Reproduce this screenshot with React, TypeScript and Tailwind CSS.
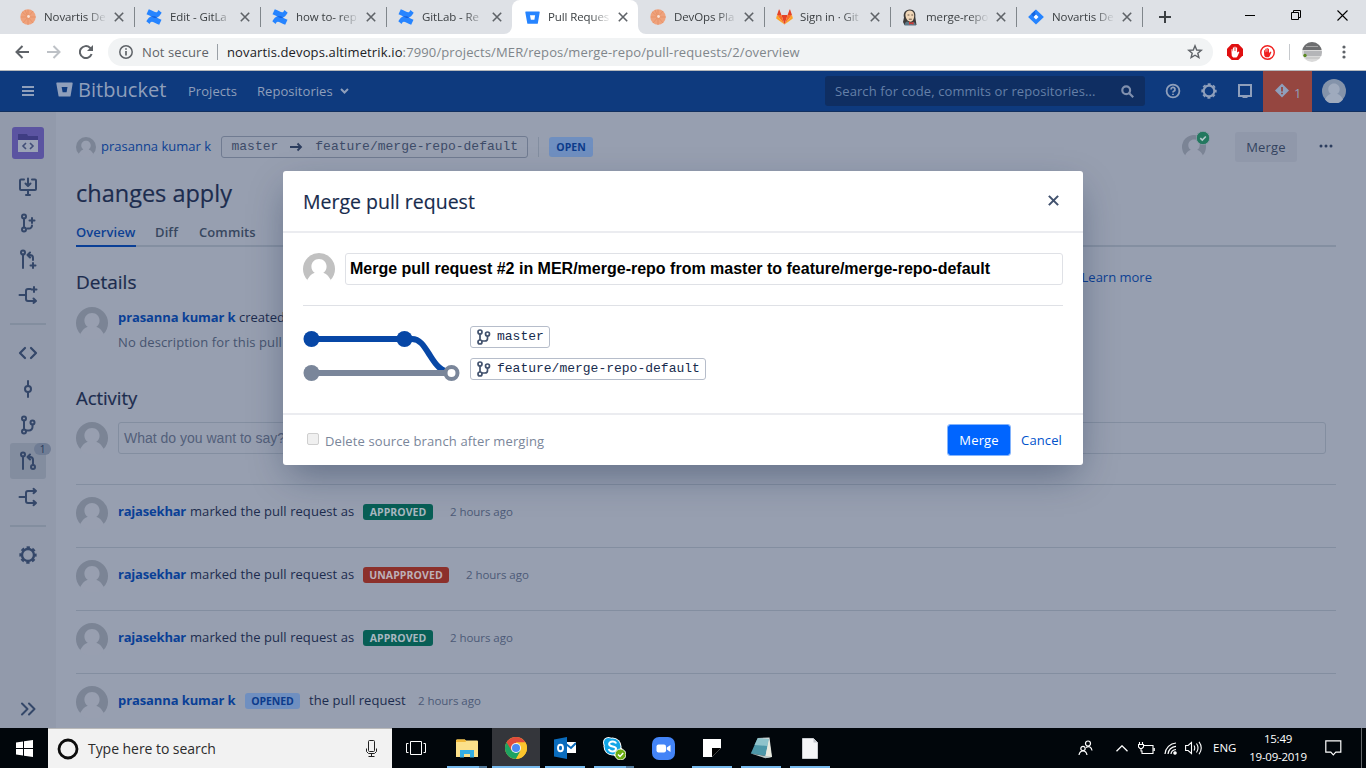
import React from "react";
import { clsx } from "clsx";

type Kids = { children?: React.ReactNode };

/* ---------- shared pieces ---------- */

function Avatar({ size, ring, face }: { size: number; ring: string; face: string }) {
  return (
    <svg width={size} height={size} viewBox="0 0 32 32" className="block shrink-0">
      <circle cx="16" cy="16" r="16" fill={ring} />
      <path
        d="M16 6c4.400 0 7.600 3.300 7.600 7.700 0 2.500-1.300 4.900-3.300 6.100C24.300 21.300 26 24 28 27.300 24.500 31.500 20.500 33 16 33S7.500 31.500 4 27.300C6 24 7.700 21.300 11.700 19.800c-2-1.200-3.300-3.600-3.300-6.100C8.400 9.300 11.600 6 16 6z"
        fill={face}
      />
    </svg>
  );
}

function Gear({ size = 18, className }: { size?: number; className?: string }) {
  return (
    <svg width={size} height={size} viewBox="0 0 18 18" fill="none" stroke="currentColor" className={className}>
      <circle cx="9" cy="9" r="6" strokeWidth="2.400" />
      <circle cx="9" cy="9" r="7.700" strokeWidth="1.900" strokeDasharray="3.400 2.648" strokeDashoffset="1.700" />
    </svg>
  );
}

function Line({ children, w = 2 }: Kids & { w?: number }) {
  return (
    <svg width="20" height="20" viewBox="0 0 20 20" fill="none" stroke="currentColor" strokeWidth={w} strokeLinecap="round" strokeLinejoin="round">
      {children}
    </svg>
  );
}

const BranchPaths = () => (
  <>
    <circle cx="6" cy="3.500" r="2" />
    <circle cx="6" cy="16.500" r="2" />
    <circle cx="14.500" cy="7.500" r="2" />
    <path d="M6 5.500v9M14.500 9.500v2.500a3.500 3.500 0 0 1-3.500 3.500H8.500" />
  </>
);

/* ---------- browser chrome ---------- */

function Ball() {
  return (
    <svg width="16" height="16" viewBox="0 0 16 16">
      <circle cx="8" cy="8" r="7.700" fill="#efa27c" />
      <path d="M8 8 2 3M8 8 5 1M8 8 1 8M8 8l-5 6M8 8v8M8 8l5 6M8 8h8M8 8l5-6M8 8l0-7" stroke="#e58e62" strokeWidth=".7" />
      <circle cx="8.500" cy="7.500" r="1.400" fill="#fbe3d6" />
    </svg>
  );
}

function Confluence() {
  return (
    <svg width="16" height="16" viewBox="0 0 16 16" className="shrink-0">
      <path d="M.3 12.200C2 9.500 3.800 6.800 7 7.300c2.500.5 5.300 2.200 8.500 3.500l-2.300 4.900C9.500 14.200 7.300 12.700 5.800 12.700c-1 0-1.500.9-2.200 2.300z" fill="#2684ff" />
      <path d="M15.700 3.800C14 6.500 12.200 9.200 9 8.700 6.500 8.200 3.700 6.500.5 5.200L2.800.3C6.500 1.800 8.700 3.300 10.200 3.300c1 0 1.500-.9 2.200-2.300z" fill="#2684ff" />
      <path d="M4.500 6.900C6.500 8 8.500 9.300 11.500 9L9 7.200 7 7.200z" fill="#1560dd" />
    </svg>
  );
}

function Bucket({ size, body, hole }: { size: number; body: string; hole: string }) {
  return (
    <svg width={size} height={size} viewBox="0 0 16 16">
      <path d="M1 1.500h14a.7.7 0 0 1 .7.800l-2 11.700a.8.800 0 0 1-.8.700H3.200a.8.800 0 0 1-.8-.7L.3 2.300A.7.700 0 0 1 1 1.500z" fill={body} />
      <path d="M5.300 5.600h5.500L10 10.500H6.200z" fill={hole} />
    </svg>
  );
}

function GitlabIcon() {
  return (
    <svg width="17" height="16" viewBox="0 0 17 16" className="shrink-0">
      <path d="M8.500 15.500 11.600 6H5.400z" fill="#e24329" />
      <path d="M8.500 15.500 5.400 6H1zM8.500 15.500 11.600 6H16z" fill="#fc6d26" />
      <path d="M1 6 .2 9c0 .3 0 .5.300.7l8 5.800zM16 6l.8 3c0 .3 0 .5-.3.7l-8 5.800z" fill="#fca326" />
      <path d="M1 6h4.400L3.400.6c-.1-.3-.4-.3-.5 0zM16 6h-4.400L13.600.6c.1-.3.4-.3.500 0z" fill="#e24329" />
    </svg>
  );
}

function JenkinsIcon() {
  return (
    <svg width="16" height="17" viewBox="0 0 16 17">
      <path d="M2 8.500C.8 4 3.400.4 7.800.4S14 3.800 13.300 8L14.500 16H2.500L1 13z" fill="#3d3a38" />
      <path d="M3.400 5.500C3.700 2.800 5.700 1.300 8 1.400c2.800.1 4.300 2.300 4.200 5.100-.1 3.600-1.500 6.100-3.700 6.200C5.800 12.600 3.400 9.500 3.400 5.500z" fill="#f0d6b7" />
      <path d="M5.600 6h1.800M9.300 6h1.800M6.800 10.200h3" stroke="#5b4a3c" strokeWidth=".9" />
      <path d="M2.500 16.500c.2-2.500 1.500-4 3-4l3 1.500 3-1c1.500.5 2.300 1.500 2.500 3.500z" fill="#5e7887" />
      <path d="m7 12.500 2 1.200 2.500-1v3.100L9 14.800l-2 1z" fill="#d33833" />
    </svg>
  );
}

function JiraIcon() {
  return (
    <svg width="16" height="16" viewBox="0 0 16 16">
      <path d="M8 .4 15.400 7.400a.8.800 0 0 1 0 1.200L8 15.600.6 8.600a.8.800 0 0 1 0-1.200z" fill="#2684ff" />
      <path d="M8 .4C6.700 2 6.700 4 8 5.400L5.500 7.900 3.200 5z" fill="#1566e0" />
      <path d="M8 5.500 10.500 8 8 10.500 5.500 8z" fill="#fff" />
    </svg>
  );
}

const Cross = ({ s, w, c }: { s: number; w: number; c: string }) => (
  <svg width={s} height={s} viewBox="0 0 10 10" fill="none" stroke={c} strokeWidth={w} className="shrink-0">
    <path d="M.8.800 9.200 9.200M9.200.8.800 9.200" />
  </svg>
);

function Tab({ icon, label, active, sep }: { icon: React.ReactNode; label: string; active?: boolean; sep?: boolean }) {
  return (
    <div className={clsx("relative flex h-[34px] w-[126px] shrink-0 items-center pl-3", active && "rounded-t-lg bg-white")}>
      <span className="flex w-4 shrink-0 justify-center">{icon}</span>
      <span className="ml-2 w-[63px] shrink-0 whitespace-nowrap text-[11.5px] leading-5 tracking-[-0.1px] text-[#3c4043] [mask-image:linear-gradient(90deg,#000_68%,transparent_100%)]">
        {label}
      </span>
      <span className="ml-[7px]">
        <Cross s={10} w={1.6} c="#5f6368" />
      </span>
      {sep && <span className="absolute right-[-1px] top-[7px] h-5 w-px bg-[#80868b]" />}
      {active && (
        <>
          <svg className="absolute bottom-0 left-[-8px]" width="8" height="8"><path d="M0 8h8V0a8 8 0 0 1-8 8z" fill="#fff" /></svg>
          <svg className="absolute bottom-0 right-[-8px]" width="8" height="8"><path d="M8 8H0V0a8 8 0 0 0 8 8z" fill="#fff" /></svg>
        </>
      )}
    </div>
  );
}

function TabStrip() {
  return (
    <div className="flex h-[34px] shrink-0 bg-[#dee1e6] pl-2">
      <Tab icon={<Ball />} label="Novartis De" sep />
      <Tab icon={<Confluence />} label="Edit - GitLa" sep />
      <Tab icon={<Confluence />} label="how to- rep" sep />
      <Tab icon={<Confluence />} label="GitLab - Re" />
      <Tab icon={<Bucket size={15} body="#2684ff" hole="#fff" />} label="Pull Reques" active />
      <Tab icon={<Ball />} label="DevOps Pla" sep />
      <Tab icon={<GitlabIcon />} label="Sign in · Git" sep />
      <Tab icon={<JenkinsIcon />} label="merge-repo" sep />
      <Tab icon={<JiraIcon />} label="Novartis De" sep />
      <div className="flex flex-1 items-center">
        <svg width="12" height="12" viewBox="0 0 12 12" className="ml-[17px]" stroke="#3c4043" strokeWidth="2"><path d="M6 0v12M0 6h12" /></svg>
        <div className="mb-1 ml-auto flex h-7 items-center gap-9 pr-[18px]">
          <svg width="10" height="10" viewBox="0 0 10 10"><path d="M0 5.500h10" stroke="#000" /></svg>
          <svg width="10" height="10" viewBox="0 0 10 10" fill="none" stroke="#000"><path d="M.5 2.500h7v7h-7zM2.500 2.500v-2h7v7h-2" /></svg>
          <svg width="11" height="11" viewBox="0 0 11 11" stroke="#000" strokeWidth="1.100"><path d="m.5.500 10 10m0-10-10 10" /></svg>
        </div>
      </div>
    </div>
  );
}

function Toolbar() {
  return (
    <div className="flex h-[37px] shrink-0 items-center border-b border-[#b5b8bc] bg-white text-[#5f6368]">
      <svg width="14" height="14" viewBox="0 0 14 14" className="ml-[15px]" fill="none" stroke="#5f6368" strokeWidth="2"><path d="M14 7H1.500M7.500 1 1.500 7l6 6" /></svg>
      <svg width="14" height="14" viewBox="0 0 14 14" className="ml-[18px]" fill="none" stroke="#bdc1c6" strokeWidth="2"><path d="M0 7h12.500M6.500 1l6 6-6 6" /></svg>
      <svg width="14" height="14" viewBox="0 0 14 14" className="ml-[18px]" fill="none" stroke="#5f6368" strokeWidth="2"><path d="M12.600 9A6 6 0 1 1 11 2.700L13 5" /><path d="M14 0v6H8z" fill="#5f6368" stroke="none" /></svg>
      <div className="ml-[15px] flex h-7 w-[1105px] items-center rounded-full bg-[#f1f3f4] pl-[11px] text-[13px]">
        <svg width="14" height="14" viewBox="0 0 14 14" fill="none" stroke="#5f6368" strokeWidth="1.500"><circle cx="7" cy="7" r="6.200" /><path d="M7 6v4.500M7 3.300v1.500" strokeWidth="1.700" /></svg>
        <span className="ml-[9px] w-[75px] whitespace-nowrap pt-px tracking-[0.1px]">Not secure</span>
        <span className="h-4 w-px bg-[#9aa0a6]" />
        <span className="ml-[9px] whitespace-nowrap pt-px tracking-[0.13px] text-[#80868b]"><span className="text-[#202124]">novartis.devops.altimetrik.io</span>:7990/projects/MER/repos/merge-repo/pull-requests/2/overview</span>
        <svg width="16" height="16" viewBox="0 0 16 16" className="ml-auto mr-[10px]" fill="none" stroke="#5f6368" strokeWidth="1.400"><path d="m8 1.800 1.700 4.200 4.600.300-3.500 2.900 1.100 4.400L8 11.200l-3.900 2.400 1.100-4.400L1.700 6.300l4.600-.3z" /></svg>
      </div>
      <svg width="16" height="16" viewBox="0 0 16 16" className="ml-[14px]"><path d="M4.700 0h6.600L16 4.700v6.600L11.300 16H4.700L0 11.300V4.700z" fill="#e00f10" /><path d="M4.500 8.500V5.300h1v2h.4V3.600H7v3.500h.4V2.800h1.200v4.300H9V3.600h1.100v5l1.500-1.200.8.600-1.900 4.200-1 1.200H6.200L4.800 12z" fill="#fff" /></svg>
      <svg width="15" height="15" viewBox="0 0 16 16" className="ml-[17px]"><circle cx="8" cy="8" r="7.200" fill="#fff" stroke="#f0201f" strokeWidth="1.500" /><path d="M4.300 8.500V5.600h1v2h.4V4H6.700v3.200h.4V3.300h1.100v3.900h.4V4H9.600v4.600l1.700-1.600.9.500-1.900 4.400-.9 1.100H5.900L4.600 11.500z" fill="#f0201f" /></svg>
      <span className="ml-[14px] h-4 w-px bg-[#c6c9cd]" />
      <svg width="20" height="20" viewBox="0 0 20 20" className="ml-[12px]">
        <defs><clipPath id="pf"><circle cx="10" cy="10" r="10" /></clipPath></defs>
        <g clipPath="url(#pf)"><path d="M0 0h20v20H0z" fill="#d9d9d9" /><path d="M0 0h20v8H0z" fill="#6d6e70" /><path d="M2 9h18v5H2z" fill="#b4b5b8" /><path d="M4 4.500h12" stroke="#a5a5a5" /><path d="M4 16h14" stroke="#bbb" /><circle cx="3" cy="13.500" r="1.700" fill="#5b8a22" /></g>
      </svg>
      <svg width="4" height="14" viewBox="0 0 4 14" className="ml-[20px]" fill="#5f6368"><circle cx="2" cy="2" r="1.600" /><circle cx="2" cy="7" r="1.600" /><circle cx="2" cy="12" r="1.600" /></svg>
    </div>
  );
}

/* ---------- Bitbucket ---------- */

function AppHeader() {
  return (
    <div className="flex h-[41px] shrink-0 items-center border-b border-[#12305f] bg-[#0e3a7e] text-[13px] text-[#8f9fbb]">
      <svg width="12" height="10" viewBox="0 0 12 10" className="ml-[22px]" stroke="currentColor" strokeWidth="1.800"><path d="M0 1h12M0 5h12M0 9h12" /></svg>
      <span className="mb-1 ml-[22px] flex"><Bucket size={17} body="#8f9fbb" hole="#0e3a7e" /></span>
      <span className="mb-[3px] ml-[5px] w-[110px] text-[20px] leading-6 tracking-[0.05px]">Bitbucket</span>
      <span className="w-[69px] pt-px tracking-[0.05px]">Projects</span>
      <span className="w-[82px] pt-px tracking-[0.05px]">Repositories</span>
      <svg width="9" height="6" viewBox="0 0 9 6" className="ml-px" fill="none" stroke="currentColor" strokeWidth="2"><path d="m1 1 3.500 3.500L8 1" /></svg>
      <div className="ml-auto flex h-[30px] w-[320px] items-center justify-between rounded-[3px] bg-[#0f2e62] pl-[10px] pr-[11px] text-[#6580a8]">
        <span className="whitespace-nowrap pt-px tracking-[0.1px]">Search for code, commits or repositories...</span>
        <svg width="13" height="13" viewBox="0 0 13 13" fill="none" stroke="#8090ae" strokeWidth="2.200"><circle cx="5.200" cy="5.200" r="3.900" /><path d="m8 8 4.200 4.200" /></svg>
      </div>
      <svg width="16" height="16" viewBox="0 0 16 16" className="ml-[20px]" fill="none" stroke="currentColor" strokeWidth="1.800"><circle cx="8" cy="8" r="6.400" /><path d="M6 6.400a2 2 0 1 1 2.800 1.800c-.6.300-.8.600-.8 1.300M8 10.700v1.300" /></svg>
      <Gear size={16} className="ml-[20px]" />
      <svg width="16" height="16" viewBox="0 0 16 16" className="ml-[20px]" fill="none" stroke="currentColor" strokeWidth="2"><path d="M2 2h12v11H2z" /><path d="M5.500 14h5" /></svg>
      <span className="ml-[10px] flex h-[41px] w-[49px] items-center bg-[#954640] pl-[11px]">
        <svg width="16" height="16" viewBox="0 0 16 16"><path d="m8 .6 7 6.900-7 7L1 7.500z" fill="currentColor" strokeLinejoin="round" /><path d="M8 4v4.400M8 9.700v1.600" stroke="#954640" strokeWidth="1.800" /></svg>
        <span className="ml-[4px] mt-[5px] text-[13px]">1</span>
      </span>
      <span className="ml-[10px] mr-[20px] rounded-full"><Avatar size={24} ring="#8493aa" face="#9faabd" /></span>
    </div>
  );
}

function SideItem({ children, active }: Kids & { active?: boolean }) {
  return (
    <div className={clsx("relative flex h-9 w-9 shrink-0 items-center justify-center rounded-[3px]", active && "bg-[#838d9f]")}>
      {children}
      {active && (
        <span className="absolute left-6 top-0 flex h-3 w-[17px] items-center justify-center rounded-full bg-[#6f7c94] text-[10px] leading-3 text-[#26385a]">1</span>
      )}
    </div>
  );
}

function Sidebar() {
  return (
    <div className="flex w-14 shrink-0 flex-col items-center bg-[#929aab] pt-[15px] text-[#344769]">
      <div className="flex h-8 w-8 shrink-0 items-center justify-center rounded-[3px] bg-[#5b54a1]">
        <svg width="20" height="19" viewBox="0 0 20 19"><path d="M0 0h9l1 2h10v4H0z" fill="#3f3d83" /><path d="M0 6h20v12H0z" fill="#9ba3b6" /><path d="m8 9-3 3 3 3m4-6 3 3-3 3" fill="none" stroke="#424f78" strokeWidth="1.600" /></svg>
      </div>
      <div className="mt-[10px]">
        <SideItem><Line><path d="M6 2.500H3a1 1 0 0 0-1 1v8.500a1 1 0 0 0 1 1h14a1 1 0 0 0 1-1V3.500a1 1 0 0 0-1-1h-3M10 1.500v7M7.500 6.500 10 9l2.500-2.500M8 18h4M10 14v3.500" /></Line></SideItem>
        <SideItem><Line><circle cx="6" cy="3.500" r="2" /><circle cx="6" cy="16.500" r="2" /><path d="M6 5.500v9M14 5v5M11.500 7.500h5M14 12.500a3 3 0 0 1-3 3H9.500" /></Line></SideItem>
        <SideItem><Line><circle cx="5" cy="3.500" r="2" /><path d="M5 5.500V19M15 14v5M12.500 16.500h5M15 11V9a3 3 0 0 0-3-3H9.500M12 3.500 9.500 6l2.500 2.500" /></Line></SideItem>
        <SideItem><Line><path d="M1.500 10H8M16 16H10a2 2 0 0 1-2-2V6a2 2 0 0 1 2-2h2.500M16 2v5M13.500 4.500h5M15.500 13.500 18 16l-2.500 2" /></Line></SideItem>
      </div>
      <div className="mt-[10px] h-0.5 w-9 shrink-0 bg-[#838e9f]" />
      <div className="mt-[10px]">
        <SideItem><Line w={2.2}><path d="m7 5-5 5 5 5M13 5l5 5-5 5" /></Line></SideItem>
        <SideItem><Line><circle cx="10" cy="10" r="3" /><path d="M10 2v5M10 13v5" /></Line></SideItem>
        <SideItem><Line><BranchPaths /></Line></SideItem>
        <SideItem active><Line><circle cx="5" cy="3.500" r="2" /><circle cx="15" cy="16" r="2" /><path d="M5 5.500V18M15 14V9a3 3 0 0 0-3-3H9.500M12 3.500 9.500 6l2.500 2.500" /></Line></SideItem>
        <SideItem><Line><path d="M1.500 10H8M18 16H10a2 2 0 0 1-2-2V6a2 2 0 0 1 2-2h8M15.500 1.800 18 4l-2.500 2.200M15.500 13.800 18 16l-2.500 2.200" /></Line></SideItem>
      </div>
      <div className="mt-[10px] h-0.5 w-9 shrink-0 bg-[#838e9f]" />
      <div className="mt-[10px]"><SideItem><Gear size={18} /></SideItem></div>
      <div className="mb-px mt-auto"><SideItem><Line><path d="m4 4.500 5.500 5.500L4 15.500M11 4.500l5.500 5.500-5.500 5.500" /></Line></SideItem></div>
    </div>
  );
}

const PageAvatar = ({ size }: { size: number }) => <Avatar size={size} ring="#7b8495" face="#989fb0" />;

function Lozenge({ tone, children }: Kids & { tone: "green" | "red" | "blue" }) {
  return (
    <span
      className={clsx(
        "flex h-4 shrink-0 items-center justify-center rounded-[3px] pt-px text-[10.5px] font-bold leading-[15px]",
        tone === "green" && "w-[70px] bg-[#085f56] tracking-[0.05px] text-[#a9b7c0]",
        tone === "red" && "w-[86px] bg-[#8c302b] tracking-[0.1px] text-[#bdb0b8]",
        tone === "blue" && "w-[55px] bg-[#6f8fc0] tracking-[-0.05px] text-[#0c3b8b]"
      )}
    >
      {children}
    </span>
  );
}

function Activity({ who, lozenge, time, opened }: { who: string; lozenge: React.ReactNode; time: string; opened?: boolean }) {
  return (
    <div className="flex h-[63px] items-start border-t border-[#838ea0] pt-3">
      <PageAvatar size={32} />
      <div className="ml-[10px] flex h-[30px] items-center whitespace-nowrap text-[13px] text-[#1c2c4e]">
        <span className={clsx("font-bold text-[#0a3f96]", opened ? "w-[127px] tracking-[-0.1px]" : "w-[72px] tracking-[-0.2px]")}>{who}</span>
        {opened ? (
          <>{lozenge}<span className="ml-[9px] w-[109px] tracking-[0.06px]">the pull request</span></>
        ) : (
          <><span className="w-[173px] tracking-[0.06px]">marked the pull request as</span>{lozenge}<span className="w-[17px]" /></>
        )}
        <span className="text-[11.5px] tracking-[-0.05px] text-[#4c5a77]">{time}</span>
      </div>
    </div>
  );
}

function PullRequest() {
  return (
    <div className="flex min-w-0 flex-1 flex-col overflow-hidden bg-[#979fb0] pl-5 pr-[30px] text-[13px] text-[#1c2c4e]">
      <div className="mt-5 flex h-[30px] shrink-0 items-center">
        <PageAvatar size={20} />
        <span className="ml-[5px] w-[120px] whitespace-nowrap text-[#0d3f93]">prasanna kumar k</span>
        <span className="flex h-[22px] w-[307px] items-center whitespace-nowrap rounded-[3px] border border-[#707b91] pl-[9.500px] font-['Liberation_Mono',monospace] text-[13px] text-[#3d4b68]">
          master
          <svg width="13" height="10" viewBox="0 0 13 10" className="mx-3 shrink-0 text-[#2c3d5e]" fill="none" stroke="currentColor" strokeWidth="1.800"><path d="M0 5h11.500M7.500 1.500 11 5 7.500 8.500" /></svg>
          feature/merge-repo-default
        </span>
        <span className="ml-[10px] h-5 w-px bg-[#838ea0]" />
        <span className="ml-[10px] flex h-5 w-11 items-center justify-center rounded-[3px] bg-[#6f8fc0] pt-px text-[10.500px] font-bold text-[#0c3b8b]">OPEN</span>
        <span className="relative ml-auto"><PageAvatar size={24} />
          <svg width="14" height="14" viewBox="0 0 14 14" className="absolute -right-1 -top-1"><circle cx="7" cy="7" r="6.700" fill="#23785f" stroke="#979fb0" strokeWidth=".8" /><path d="m4.300 7.200 2 1.900 3.500-3.600" fill="none" stroke="#b4c9cc" strokeWidth="1.600" /></svg>
        </span>
        <span className="ml-[29px] flex h-[30px] w-[62px] items-center justify-center rounded-[3px] bg-[#9098aa] pt-0.5 tracking-[0.15px] text-[#33435f]">Merge</span>
        <svg width="14" height="4" viewBox="0 0 14 4" className="mb-[3px] ml-[22px] mr-[3px]" fill="#2c3d5e"><circle cx="2" cy="2" r="1.500" /><circle cx="7" cy="2" r="1.500" /><circle cx="12" cy="2" r="1.500" /></svg>
      </div>
      <h1 className="mt-[17px] h-[29px] shrink-0 overflow-hidden whitespace-nowrap text-[23.5px] font-medium leading-[29px] [-webkit-text-stroke:0.2px_currentColor]">changes apply</h1>
      <div className="mt-[12px] flex h-[27px] shrink-0 border-b-2 border-[#848fa1] font-semibold leading-[25px] text-[#37475f]">
        <span className="h-[27px] w-[60px] whitespace-nowrap border-b-2 border-[#0a3f96] tracking-[0.05px] text-[#0d3f93]">Overview</span>
        <span className="ml-[19px] w-6 tracking-[0.1px]">Diff</span>
        <span className="ml-5 tracking-[0.1px]">Commits</span>
      </div>
      <div className="mt-[15px] flex h-8 shrink-0 items-center justify-between">
        <h2 className="mt-2 text-[19px] font-medium leading-7 [-webkit-text-stroke:0.2px_currentColor]">Details</h2>
        <a className="mr-[184px] whitespace-nowrap text-[#0d3f93]">Learn more</a>
      </div>
      <div className="mt-[13px] flex shrink-0">
        <PageAvatar size={32} />
        <div className="ml-[10px] whitespace-nowrap">
          <p className="h-6 leading-[20px]"><b className="inline-block w-[121px] tracking-[-0.1px] text-[#0a3f96]">prasanna kumar k</b>created</p>
          <p className="h-6 leading-[22px] tracking-[0.1px] text-[#46546f]">No description for this pull request</p>
        </div>
      </div>
      <h2 className="mt-[29px] h-7 shrink-0 text-[18.5px] font-medium leading-[27px] tracking-[-0.05px] [-webkit-text-stroke:0.2px_currentColor]">Activity</h2>
      <div className="mt-[10px] flex shrink-0">
        <PageAvatar size={32} />
        <div className="ml-[10px] flex h-8 w-[1208px] items-center rounded-[3px] border border-[#838ea0] pl-[5px] font-['Liberation_Sans',Arial,sans-serif] text-[14px] text-[#53607a]">What do you want to say?</div>
      </div>
      <div className="mt-[30px]">
        <Activity who="rajasekhar" lozenge={<Lozenge tone="green">APPROVED</Lozenge>} time="2 hours ago" />
        <Activity who="rajasekhar" lozenge={<Lozenge tone="red">UNAPPROVED</Lozenge>} time="2 hours ago" />
        <Activity who="rajasekhar" lozenge={<Lozenge tone="green">APPROVED</Lozenge>} time="2 hours ago" />
        <Activity who="prasanna kumar k" lozenge={<Lozenge tone="blue">OPENED</Lozenge>} time="2 hours ago" opened />
      </div>
    </div>
  );
}

function BranchTag({ name }: { name: string }) {
  return (
    <span className="flex h-[22px] w-fit items-center rounded-[3px] border border-[#b6bdca] px-[5px] font-['Liberation_Mono',monospace] text-[13px] leading-5 text-[#172b4d]">
      <svg width="16" height="16" viewBox="0 0 16 16" className="mr-[5px]" fill="none" stroke="#42526e" strokeWidth="1.700">
        <circle cx="4" cy="3" r="2" />
        <circle cx="4" cy="13" r="2" />
        <circle cx="11.500" cy="5" r="2" />
        <path d="M4 5v6M11.500 7v2.500a2.500 2.500 0 0 1-2.500 2.500H6" />
      </svg>
      {name}
    </span>
  );
}

function MergeDialog() {
  return (
    <div className="absolute left-[283px] top-[171px] flex h-[294px] w-[800px] flex-col rounded-[3px] bg-white text-[13px] shadow-[0_14px_36px_-6px_rgba(9,30,66,0.4)]">
      <div className="flex h-[62px] items-center justify-between border-b-2 border-[#ebecf0] pl-5 pr-[24px]">
        <h2 className="pt-px text-[19.5px] font-medium text-[#172b4d] [-webkit-text-stroke:0.15px_currentColor]">Merge pull request</h2>
        <span className="mb-px"><Cross s={11} w={1.9} c="#42526e" /></span>
      </div>
      <div className="flex flex-1 flex-col px-5 pt-5">
        <div className="flex items-center gap-[10px]">
          <Avatar size={32} ring="#c1c1c1" face="#ffffff" />
          <div className="flex h-8 flex-1 items-center whitespace-nowrap rounded-[3px] border border-[#dfe1e6] pl-1 font-['Liberation_Sans',Arial,sans-serif] text-[16px] font-bold text-black">
            Merge pull request #2 in MER/merge-repo from master to feature/merge-repo-default
          </div>
        </div>
        <div className="mt-5 h-px bg-[#dfe1e6]" />
        <div className="mt-5 flex">
          <svg width="158" height="60" viewBox="0 0 158 60" fill="none" strokeWidth="6">
            <path d="M8 13h101c8 0 12 7 18 16.500S138 46 148 46" stroke="#0747a6" />
            <path d="M8 47h140" stroke="#7a869a" />
            <circle cx="8.500" cy="13" r="8" fill="#0747a6" /><circle cx="101.500" cy="13" r="8" fill="#0747a6" />
            <circle cx="8.500" cy="47" r="8" fill="#7a869a" />
            <circle cx="148.500" cy="47" r="6" fill="#fff" stroke="#7a869a" strokeWidth="4" />
          </svg>
          <div className="ml-[9px] flex flex-col gap-[10px]">
            <BranchTag name="master" />
            <BranchTag name="feature/merge-repo-default" />
          </div>
        </div>
      </div>
      <div className="flex h-[52px] shrink-0 items-center border-t-2 border-[#ebecf0] pr-[21px]">
        <span className="mb-[3px] ml-6 h-3 w-3 rounded-[2px] border border-[#cfcfcf] bg-[#f0f0f0]" />
        <span className="ml-[6px] mt-[3px] whitespace-nowrap tracking-[0.12px] text-[#7a869a]">Delete source branch after merging</span>
        <span className="ml-auto flex h-[30px] w-[62px] items-center justify-center rounded-[2px] bg-[#0065ff] pt-0.5 tracking-[0.15px] text-white outline outline-1 outline-[#84b4fc]">Merge</span>
        <span className="ml-[11px] pt-0.5 tracking-[0.12px] text-[#0052cc]">Cancel</span>
      </div>
    </div>
  );
}

/* ---------- taskbar ---------- */

function Task({ children, running, stacked, focused }: Kids & { running?: boolean; stacked?: boolean; focused?: boolean }) {
  return (
    <div className={clsx("flex h-10 w-12 shrink-0 flex-col items-center", focused && "bg-[#34363b]")}>
      <span className="flex h-[38px] items-center pt-[2px]">{children}</span>
      {running && (
        <span className="flex h-0.5 w-full justify-center">
          <span className={clsx("bg-[#76b9ed]", focused ? "w-12" : stacked ? "w-8" : "w-10")} />
          {stacked && <span className="w-2 bg-[#52799b]" />}
        </span>
      )}
    </div>
  );
}

function Taskbar() {
  return (
    <div className="flex h-10 shrink-0 bg-[#01060b] text-white">
      <div className="flex w-12 items-center justify-center">
        <svg width="17" height="17" viewBox="0 0 17 17" fill="#fff"><path d="M0 2.400 7 1.400V8H0zM8 1.300 17 0v8H8zM0 9h7v6.600l-7-1zM8 9h9v8L8 15.700z" /></svg>
      </div>
      <div className="flex w-[344px] items-center border-t border-[#b9b9b9] bg-[#f2f2f2] pl-[9px] pr-[14px]">
        <svg width="22" height="22" viewBox="0 0 22 22"><circle cx="11" cy="11" r="9" fill="none" stroke="#0c0c0c" strokeWidth="2.800" /></svg>
        <span className="ml-[9px] whitespace-nowrap text-[14px] tracking-[-0.05px] text-[#2c2c2c]">Type here to search</span>
        <svg width="13" height="17" viewBox="0 0 13 17" className="ml-auto" fill="none" stroke="#222"><rect x="3.500" y=".5" width="6" height="11" rx="1" /><path d="M1.500 8.500v3l2 2h6l2-2v-3M6.500 14v2.500M3.500 16.500h6" /></svg>
      </div>
      <Task><svg width="20" height="16" viewBox="0 0 20 16" fill="none" stroke="#fff"><path d="M4.500 1.500h11v13h-11zM2.500 3.500h-2v9h2M17.500 3.500h2v9h-2" /></svg></Task>
      <div className="ml-[3px] flex gap-px">
        <Task running stacked>
          <svg width="22" height="19" viewBox="0 0 22 19"><path d="M0 1.500.8.500h8l1 1H21a1 1 0 0 1 1 1V18H0z" fill="#fbe08a" /><path d="M0 1.500.8.500h8l1 1v1.500H0z" fill="#f0b93b" /><path d="M4 18.500V11h14v7.500h-4V15H8v3.500z" fill="#34aee3" /></svg>
        </Task>
        <Task running focused>
          <svg width="22" height="22" viewBox="0 0 22 22"><circle cx="11" cy="11" r="11" fill="#fbc52c" /><path d="M11 11 1.500 5.500A11 11 0 0 1 20.500 5.500H11z" fill="#df4b3c" /><path d="M11 11 1.500 5.500A11 11 0 0 0 11 22l4.500-8z" fill="#1ea362" /><path d="M20.500 5.500H11L15.500 14 11 22A11 11 0 0 0 20.500 5.500z" fill="#fbc52c" /><path d="M1.500 5.500 6.500 14 11 11V5.500z" fill="#df4b3c" /><path d="M1.500 5.500 6.200 13.500 11 16l-4 4.500A11 11 0 0 1 1.500 5.500z" fill="#1ea362" /><circle cx="11" cy="11" r="5" fill="#f3f4f2" /><circle cx="11" cy="11" r="4" fill="#4a8af4" /></svg>
        </Task>
        <Task running>
          <svg width="22" height="22" viewBox="0 0 22 22"><path d="M10 5h12v11H10z" fill="#fff" /><path d="m12 7 5 4 5-5" fill="none" stroke="#0a6cbd" strokeWidth="2" /><path d="M0 2.500 13 0v22L0 19.500z" fill="#0a6cbd" /><ellipse cx="6.500" cy="11" rx="2.500" ry="3.300" fill="none" stroke="#fff" strokeWidth="1.900" /></svg>
        </Task>
        <Task running stacked>
          <span className="flex h-[22px] w-[24px] items-center justify-center">
            <svg width="24" height="24" viewBox="0 0 24 24" className="shrink-0"><circle cx="10.500" cy="10.500" r="9" fill="#fff" /><circle cx="6.500" cy="6.500" r="5.500" fill="#fff" /><circle cx="15.500" cy="15.500" r="5.500" fill="#fff" /><circle cx="10.500" cy="10.500" r="8" fill="#12a5e6" /><circle cx="6.500" cy="6.500" r="4.500" fill="#12a5e6" /><path d="M14 7.500c-.5-1.500-1.800-2-3.500-2-2 0-3.400 1-3.400 2.500 0 3.500 6.900 1.500 6.900 4.700 0 1.700-1.500 2.700-3.500 2.700s-3.300-.8-3.800-2.400" fill="none" stroke="#fff" strokeWidth="2" /><circle cx="18.500" cy="18.500" r="5.500" fill="#6bac12" stroke="#f2f8ea" /><path d="m16 18.500 2 2 3.200-3.600" fill="none" stroke="#fff" strokeWidth="1.500" /></svg>
          </span>
        </Task>
        <Task><svg width="23" height="23" viewBox="0 0 23 23"><rect width="23" height="23" rx="7" fill="#4384f7" /><rect x="4.500" y="7.500" width="9.500" height="8" rx="2" fill="#fff" /><path d="m14.800 10.500 3.700-2.500v7l-3.700-2.500z" fill="#fff" /></svg></Task>
        <Task running><svg width="18" height="18" viewBox="0 0 18 18"><path d="M0 0h18v9L9 18H0z" fill="#fff" /><path d="M9 9h9l-9 9z" fill="#000" /><path d="M10.500 18H18v-7.500z" fill="#01060b" /></svg></Task>
        <Task running><svg width="23" height="22" viewBox="0 0 23 22"><path d="M7.500 1 19.500.500l2.500 19.500-6 1z" fill="#d5dcdb" /><path d="M7.500 1.500 19 2 15.500 19 .8 16.500z" fill="#4d97a8" /><path d="M7.500 1.500 19 2 17.500 9 4.500 8z" fill="#8fc3cb" /><path d="m19 2 2.700 18-6.200-1z" fill="#e9e9dd" /><path d="M.8 16.500 15.500 19l6 1-6 1.300z" fill="#b8c5c4" /></svg></Task>
        <Task running><svg width="16" height="21" viewBox="0 0 16 21"><path d="M.5.500h11l4 4v16H.500z" fill="#f4f5f7" stroke="#c9ccd0" /><path d="M11.500.5v4h4z" fill="#c2c6cb" /></svg></Task>
      </div>
      <div className="ml-auto flex items-center text-[12px]">
        <svg width="15" height="16" viewBox="0 0 15 16" fill="none" stroke="#fff" strokeWidth="1.200"><circle cx="10" cy="3.500" r="2.500" /><circle cx="5" cy="8.500" r="2.200" /><path d="M1 15c.5-2.800 2-4 4-4s3.500 1.200 4 4M8 7.500c3-2 5.500-.5 6 3" /></svg>
        <svg width="12" height="7" viewBox="0 0 12 7" className="ml-[23px]" fill="none" stroke="#fff" strokeWidth="1.300"><path d="m.5 6.300 5.500-5.500 5.500 5.500" /></svg>
        <svg width="17" height="13" viewBox="0 0 17 13" className="ml-[10px]" fill="none" stroke="#fff" strokeWidth="1.100"><path d="M6 3.500h9v8H4v-3M16.300 6v3M1.500 0v2.500M4.500 0v2.500M.5 2.500h5V5L4 6.500H2L.5 5zM3 6.500V9h1" /></svg>
        <svg width="13" height="13" viewBox="0 0 13 13" className="ml-[9px]" fill="none" stroke="#fff" strokeWidth="1.200"><path d="M1 12C1.500 6 6 1.500 12 1M4 12c.3-4 3.500-7.300 8-7.700M7 12c.2-2.400 2-4.200 5-4.500" /><circle cx="11" cy="11" r="1.200" fill="#fff" /></svg>
        <svg width="18" height="14" viewBox="0 0 18 14" className="ml-[8px]" fill="none" stroke="#fff" strokeWidth="1.100"><path d="M.6 4.500h2.500L6.500 1.500v11l-3.400-3H.6zM9 4.500q1.500 2.500 0 5M11.500 2.500q3 4.500 0 9M14 .8q4.500 6 0 12.400" /></svg>
        <span className="ml-[10px] w-[24px] text-[11.5px]">ENG</span>
        <span className="ml-[8px] flex w-[66px] flex-col items-center pb-px text-[11.5px] leading-[18px] tracking-[-0.25px]"><span>15:49</span><span className="whitespace-nowrap">19-09-2019</span></span>
        <svg width="17" height="16" viewBox="0 0 17 16" className="ml-[14px]" fill="none" stroke="#fff" strokeWidth="1.200"><path d="M.8.800h15v11.400h-5L8.300 14.800 5.800 12.200h-5z" /></svg>
        <span className="ml-[19px] mr-[4px] h-10 w-px bg-[#63676b]" />
      </div>
    </div>
  );
}

export default function App() {
  return (
    <div className="relative flex h-[768px] w-[1366px] flex-col overflow-hidden font-['Open_Sans','Noto_Sans',sans-serif]">
      <TabStrip />
      <Toolbar />
      <AppHeader />
      <div className="flex min-h-0 flex-1">
        <Sidebar />
        <PullRequest />
      </div>
      <Taskbar />
      <MergeDialog />
    </div>
  );
}
